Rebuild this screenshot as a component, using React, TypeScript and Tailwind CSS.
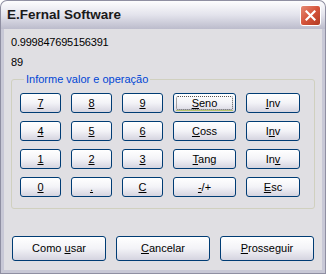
import React from 'react';

const font = { fontFamily: '"Liberation Sans", Arial, sans-serif' };

function U({ text, at }: { text: string; at: number }) {
  return (
    <>
      {text.slice(0, at)}
      <span className="underline underline-offset-[1px]">{text[at]}</span>
      {text.slice(at + 1)}
    </>
  );
}

function XpButton({
  children,
  className = '',
  focused = false,
}: {
  children: React.ReactNode;
  className?: string;
  focused?: boolean;
}) {
  return (
    <button
      className={`relative flex items-center justify-center rounded-[3px] border border-[#003c74] bg-gradient-to-b from-white via-[#f3f3f7] to-[#d5d4e0] text-[11px] text-black ${className}`}
    >
      {focused && (
        <span className="pointer-events-none absolute inset-[2px] rounded-[2px] border border-dotted border-[#555]" />
      )}
      {focused && (
        <span className="pointer-events-none absolute bottom-[1px] left-[2px] right-[2px] h-[1px] bg-[#b5c46a]" />
      )}
      <span>{children}</span>
    </button>
  );
}

export default function App() {
  const rows: { label: string; at: number; focused?: boolean }[][] = [
    [
      { label: '7', at: 0 },
      { label: '8', at: 0 },
      { label: '9', at: 0 },
      { label: 'Seno', at: 0, focused: true },
      { label: 'Inv', at: 0 },
    ],
    [
      { label: '4', at: 0 },
      { label: '5', at: 0 },
      { label: '6', at: 0 },
      { label: 'Coss', at: 0 },
      { label: 'Inv', at: 1 },
    ],
    [
      { label: '1', at: 0 },
      { label: '2', at: 0 },
      { label: '3', at: 0 },
      { label: 'Tang', at: 0 },
      { label: 'Inv', at: 2 },
    ],
    [
      { label: '0', at: 0 },
      { label: '.', at: 0 },
      { label: 'C', at: 0 },
      { label: '-/+', at: 0 },
      { label: 'Esc', at: 0 },
    ],
  ];
  const widths = ['w-[41px]', 'w-[41px]', 'w-[41px]', 'w-[63px]', 'w-[54px]'];

  return (
    <div className="flex h-[274px] w-[326px] flex-col bg-white" style={font}>
      {/* title bar */}
      <div className="flex h-[29px] items-center justify-between rounded-t-[7px] border border-b-0 border-[#8f8fa2] bg-gradient-to-b from-[#fdfdfe] via-[#e3e3ec] to-[#bcbccc] pl-[6px] pr-[4px]">
        <span className="text-[13.5px] font-bold text-[#1a1a1a]">E.Fernal Software</span>
        <div className="flex h-[21px] w-[21px] items-center justify-center rounded-[3px] border border-white bg-gradient-to-br from-[#e48a74] via-[#d5533a] to-[#b23b22]">
          <svg width="11" height="11" viewBox="0 0 11 11">
            <path d="M1.5 1.5 L9.5 9.5 M9.5 1.5 L1.5 9.5" stroke="white" strokeWidth="2.2" strokeLinecap="square" />
          </svg>
        </div>
      </div>

      {/* body with frame */}
      <div className="flex flex-1 border-x border-b border-[#8f8fa2]">
        <div className="flex flex-1 border-x-[3px] border-b-[3px] border-[#c8c8d6]">
          <div className="flex flex-1 flex-col bg-[#e0dfe3] px-[7px] pt-[3px] text-[11px] text-black">
            <div className="h-[20px] leading-[20px] tracking-[-0.2px]">0.999847695156391</div>
            <div className="h-[20px] leading-[20px]">89</div>

            <fieldset className="mt-[1px] h-[136px] rounded-[3px] border border-[#d0d0bf] pl-[8px] pt-[8px]">
              <legend className="ml-[4px] px-[2px] text-[11px] leading-[12px] text-[#0046d5]">
                Informe valor e operação
              </legend>
              <div className="flex flex-col gap-[8px]">
                {rows.map((row, r) => (
                  <div key={r} className="flex gap-[10px]">
                    {row.map((b, i) => (
                      <XpButton key={i} className={`h-[20px] ${widths[i]}`} focused={b.focused}>
                        <U text={b.label} at={b.at} />
                      </XpButton>
                    ))}
                  </div>
                ))}
              </div>
            </fieldset>

            <div className="mt-[27px] flex gap-[10px] pl-[1px]">
              <XpButton className="h-[25px] w-[94px]">
                <U text="Como usar" at={5} />
              </XpButton>
              <XpButton className="h-[25px] w-[94px]">
                <U text="Cancelar" at={0} />
              </XpButton>
              <XpButton className="h-[25px] w-[94px]">
                <U text="Prosseguir" at={0} />
              </XpButton>
            </div>
          </div>
        </div>
      </div>
    </div>
  );
}
